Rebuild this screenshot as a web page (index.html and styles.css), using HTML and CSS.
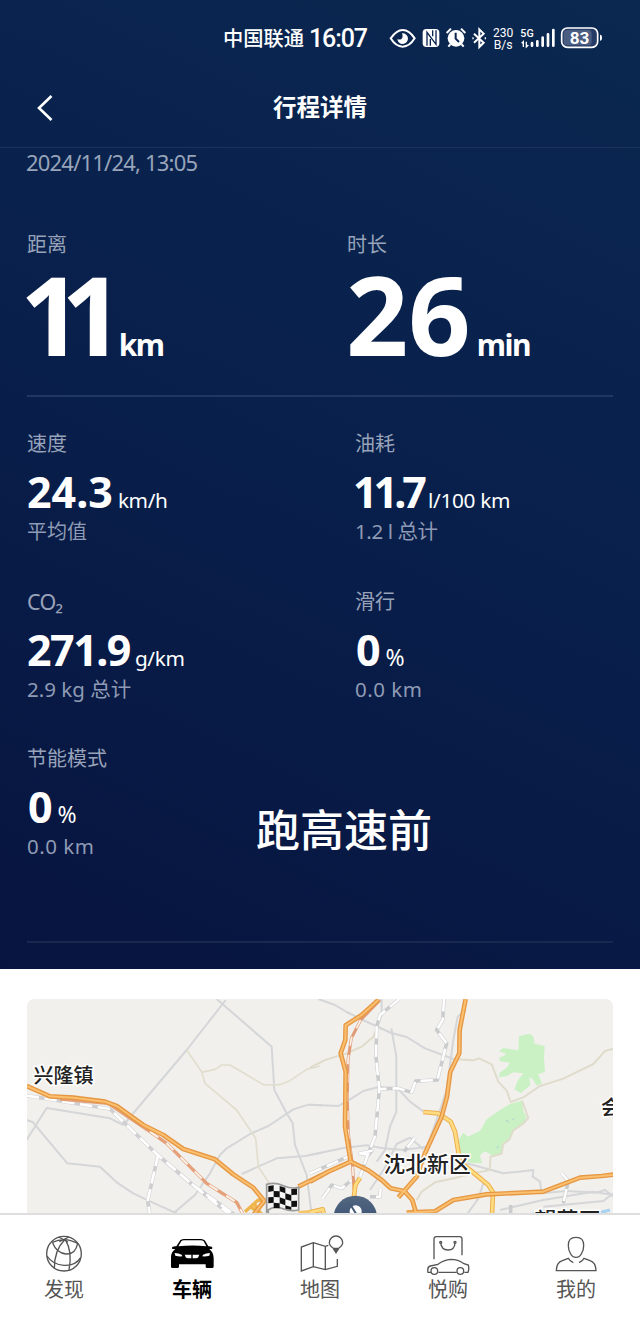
FILE: index.html
```html
<!DOCTYPE html>
<html lang="zh-CN">
<head>
<meta charset="utf-8">
<title>行程详情</title>
<link rel="stylesheet" href="styles.css">
</head>
<body>
<div class="screen">
  <main class="trip">
    <div class="status">
      <span class="carrier">中国联通</span>
      <span class="clock">16:07</span>
      <svg class="status-icons" viewBox="24 0 660 135">
        <path d="M32 70C47 49 58 45 68 45s23 5 36 25C91 91 80 95 68 95S45 91 32 70z" fill="none" stroke="#fff" stroke-width="6"/>
        <path d="M66 55a16 16 0 1 1-14 17c5 3 13 2 15-4 2-5 0-10-1-13z" fill="#fff"/>
        <rect x="128" y="42" width="50" height="54" rx="11" fill="#fff"/>
        <path d="M141 92V52l27 36V46M151 92V72M158 46v18" fill="none" stroke="#0a2550" stroke-width="4"/>
        <circle cx="228" cy="70" r="25" fill="#fff"/>
        <path d="M200 54l13-13M243 41l13 13M211 88l-6 7M245 88l6 7" stroke="#fff" stroke-width="6"/>
        <path d="M227 53v18l10 10" fill="none" stroke="#0a2550" stroke-width="6"/>
        <path d="M282 56l29 27-13 13V43l13 13-29 27M277 70h4M314 70h4" fill="none" stroke="#fff" stroke-width="6"/>
        <text x="339" y="65" class="s-small" textLength="61" lengthAdjust="spacingAndGlyphs">230</text>
        <text x="341" y="101" class="s-small" textLength="57" lengthAdjust="spacingAndGlyphs">B/s</text>
        <text x="421" y="66" class="s-net" textLength="40" lengthAdjust="spacingAndGlyphs">5G</text>
        <path d="M430 96V80l-5 5M439 80v16l6-6" fill="none" stroke="#fff" stroke-width="4"/>
        <path d="M456 92V84M472 92V79M488 92V68M504 92V58M520 92V45" stroke="#fff" stroke-width="8" stroke-linecap="round"/>
        <rect x="545" y="39" width="108" height="58" rx="17" fill="#263c66" stroke="#fff" stroke-width="5"/>
        <rect x="551" y="45" width="84" height="46" rx="11" fill="#4b5d80"/>
        <path d="M660 59q6 0 6 9t-6 9z" fill="#fff"/>
        <text x="569" y="86" class="s-batt" textLength="59" lengthAdjust="spacingAndGlyphs">83</text>
      </svg>
    </div>
    <header class="bar">
      <svg class="back" viewBox="0 0 18 30"><path d="M15.500 3L3 15L15.500 27" fill="none" stroke="#fff" stroke-width="2.600"/></svg>
      <h1 class="title">行程详情</h1>
    </header>
    <div class="date">2024/11/24, 13:05</div>
    <section class="primary">
      <div>
        <div class="label">距离</div>
        <div class="big"><span class="ones">11</span><span class="big-unit">km</span></div>
      </div>
      <div>
        <div class="label">时长</div>
        <div class="big"><span class="minutes">26</span><span class="big-unit wide">min</span></div>
      </div>
    </section>
    <section class="stats">
      <div class="stat">
        <div class="label">速度</div>
        <div class="num"><b>24.3</b><span class="unit">km/h</span></div>
        <div class="sub cjk">平均值</div>
      </div>
      <div class="stat">
        <div class="label">油耗</div>
        <div class="num"><b class="n117">11.7</b><span class="unit l100">l/100 km</span></div>
        <div class="sub total">1.2 l 总计</div>
      </div>
      <div class="stat">
        <div class="label latin">CO₂</div>
        <div class="num"><b class="n271">271.9</b><span class="unit">g/km</span></div>
        <div class="sub">2.9 kg 总计</div>
      </div>
      <div class="stat">
        <div class="label">滑行</div>
        <div class="num"><b class="zero">0</b><span class="unit pct">%</span></div>
        <div class="sub km">0.0 km</div>
      </div>
    </section>
    <section class="last">
      <div class="stat">
        <div class="label">节能模式</div>
        <div class="num"><b class="zero">0</b><span class="unit pct">%</span></div>
        <div class="sub km">0.0 km</div>
      </div>
      <div class="caption">跑高速前</div>
    </section>
  </main>
  <section class="map-wrap">
    <svg class="map" viewBox="27 999 586 214">
      <rect x="27" y="999" width="586" height="214" fill="#f1f0ed"/>
      <g transform="translate(20 990) scale(.33333)" fill="none" stroke-linejoin="round">
        <g stroke="#d5d6d8" stroke-width="6">
          <path d="M590 27L755 170L763 300L800 370L818 400L825 465L860 555L875 675"/>
          <path d="M617 30L590 65L500 180L310 405M20 450L80 354L270 385L310 405"/>
          <path d="M20 390L38 396L142 520L240 530L290 577L340 610L385 632L470 670"/>
          <path d="M460 670L525 615L570 550L600 495L620 475L690 432L745 408L820 358L865 344L905 346M665 552L770 505L855 498L905 488"/>
        </g>
        <path d="M500 180L545 245L555 280L650 360L707 445L715 530L755 590M545 247L585 238L605 225L630 225L732 285L780 284L810 272L860 238L900 228" stroke="#e1dece" stroke-width="5"/>
        <path d="M20 317L270 357L410 492L515 582L600 650L630 675M415 492L383 632L390 675M515 582L645 675" stroke="#cfcfd1" stroke-width="11"/>
        <path d="M20 317L270 357L410 492L515 582L600 650L630 675M415 492L383 632L390 675M515 582L645 675" stroke="#fff" stroke-width="8" stroke-dasharray="37 17"/>
        <path d="M120 327L265 340L390 425L440 460L560 580L650 637L670 675" stroke="#e5a079" stroke-width="10"/>
        <path d="M390 425L440 460L560 580L650 637L670 675" stroke="#faf1e8" stroke-width="6" stroke-dasharray="30 30"/>
        <path d="M675 665L715 630L730 632M690 650l40 25M705 645l20 30" stroke="#efb54c" stroke-width="10"/>
        <path d="M20 288L90 319L160 323L255 335L290 348L370 405L430 435L490 477L585 508L640 553L700 593L733 633L700 675M835 590L905 555" stroke="#e69744" stroke-width="14"/>
        <path d="M20 288L90 319L160 323L255 335L290 348L370 405L430 435L490 477L585 508L640 553L700 593L733 633L700 675M835 590L905 555" stroke="#fac06f" stroke-width="6"/>
        <path d="M835 668L905 662" stroke="#f5c567" stroke-width="10"/>
      </g>
      <g transform="translate(310 990) scale(.33333)" fill="none" stroke-linejoin="round">
        <path d="M627 139L658 131L670 139L674 161L704 168L702 205L705 245L684 253L696 280L680 287L668 268L658 260L661 286L633 309L614 299L622 274L640 250L610 247L590 258L567 262L569 248L590 233L600 218L570 214L567 205L590 192L567 184L580 174L625 181z" fill="#c9f1c4"/>
        <path d="M600 342L636 332L640 364L650 382L638 402L610 421L598 449L579 463L575 491L553 499L524 484L510 496L516 520L490 519L454 513L445 450L460 428L474 440L490 432L510 423L530 388L570 360z" fill="#c9f1c4"/>
        <path d="M588 390l8 7M560 474l6-5M612 385l-4 5" stroke="#9ec9db" stroke-width="3"/>
        <g stroke="#d5d6d8" stroke-width="6">
          <path d="M25 27L75 45L110 66L165 93L244 129L290 141L345 175L430 207"/>
          <path d="M215 27V75L200 112M244 115L259 200V365L240 410L225 480L200 515M467 60L443 80L430 150L410 300L390 360L350 475L320 560"/>
          <path d="M0 344L85 348L125 325L160 303L205 291L263 295L300 335L345 368"/>
          <path d="M0 495L100 474L170 466L220 475L280 480L350 470M470 520L580 550L625 545L670 540L668 560L690 575L695 610L770 603L860 608L885 600L910 620"/>
          <path d="M180 600L225 533L260 462L300 443L340 478M520 580L505 625L470 675M570 660L700 630L850 605L910 615M700 650L880 633L910 610"/>
        </g>
        <path d="M205 105L190 140L155 170L110 190L45 210L0 233M430 207L490 211L507 205L545 223L565 275L590 302L602 336L640 322L690 288L760 266L850 222L885 183L910 176M636 332L655 384L638 402L610 421L598 449L579 463L575 491L541 500L540 540L480 552L435 564L375 577L335 605L320 630" stroke="#e0dccb" stroke-width="6"/>
        <path d="M268 27L210 75L200 110L198 200L208 300L195 440L175 490L150 560M402 27L398 90L380 120L410 160L382 270L317 273L305 307L265 295L210 297M38 625L65 585L95 595L125 570M315 443L282 485M150 490L186 482L175 495zM0 550L115 500M212 595L210 620L180 620M755 550L775 573L760 640M602 645V675" stroke="#cacbcd" stroke-width="10.500"/>
        <path d="M268 27L210 75L200 110L198 200L208 300L195 440L175 490L150 560M402 27L398 90L380 120L410 160L382 270L317 273L305 307L265 295L210 297M38 625L65 585L95 595L125 570M315 443L282 485M150 490L186 482L175 495zM0 550L115 500M212 595L210 620L180 620M755 550L775 573L760 640" stroke="#fff" stroke-width="7.500" stroke-dasharray="37 18"/>
        <path d="M210 30L152 90L124 145L114 210L112 330L115 430L128 530L132 600" stroke="#e09a75" stroke-width="9"/>
        <path d="M152 90L124 145L114 210L112 330L115 430L128 530L132 600" stroke="#faf1e8" stroke-width="5" stroke-dasharray="28 28"/>
        <path d="M340 366L385 370L422 395L435 425L450 515L500 556L535 585L549 607L546 675M150 563L136 585L132 620M0 667L38 658L42 675" stroke="#ecae4e" stroke-width="14"/>
        <path d="M340 366L385 370L422 395L435 425L450 515L500 556L535 585L549 607L546 675M150 563L136 585L132 620M0 667L38 658L42 675" stroke="#ffdc80" stroke-width="8"/>
        <path d="M205 30L155 75L107 106L106 150L92 190L107 245L105 410L122 515L55 545L0 575M122 515L175 541L215 570L242 595L284 604L307 630L320 675M467 27L449 120L448 190L421 245L411 320L395 380L345 490L320 560L285 600L265 622M290 668L375 664L430 630L530 613L700 605L810 563L875 558L910 554" stroke="#e69744" stroke-width="14"/>
        <path d="M205 30L155 75L107 106L106 150L92 190L107 245L105 410L122 515L55 545L0 575M122 515L175 541L215 570L242 595L284 604L307 630L320 675M467 27L449 120L448 190L421 245L411 320L395 380L345 490L320 560L285 600L265 622M290 668L375 664L430 630L530 613L700 605L810 563L875 558L910 554" stroke="#fac06f" stroke-width="6"/>
        <path d="M665 675L690 663L740 670M860 670L900 660" stroke="#a8d4f2" stroke-width="10"/>
        <circle cx="136" cy="682" r="65" fill="url(#pin)"/>
        <circle cx="137" cy="664" r="18" fill="#fff"/>
        <path d="M122 645l16 26" stroke="#455a77" stroke-width="6"/>
      </g>
      <g transform="translate(20 990) scale(.33333)">
        <path d="M740 675V583q25-7 50 4t46 5v68q-24 5-47-4t-44 3v16z" fill="#f4f4f4" stroke="#999" stroke-width="5"/>
        <path d="M745 588l16-2v17l-16 3zM779 588l17 5v17l-17-6zM814 597l17-1v18l-17 1zM761 603l18 1v18l-18-1zM796 610l18 5v18l-18-5zM745 622l16-1v17l-16 2zM779 622l17 6v18l-17-6zM814 633l17-1v18l-17 1zM761 638l18 2v15l-18-1zM796 646l18 5v8l-18-3z" fill="#111"/>
      </g>
      <g class="place">
        <text x="33.500" y="1083" font-size="20">兴隆镇</text>
        <text x="383.500" y="1171.500" font-size="21.800">沈北新区</text>
        <text x="601" y="1114.500" font-size="20">会</text>
        <text x="534.500" y="1228" font-size="22">望花区</text>
      </g>
      <defs><linearGradient id="pin" x2="0" y2="1"><stop stop-color="#53677f"/><stop offset=".5" stop-color="#405778"/></linearGradient></defs>
    </svg>
  </section>
  <nav class="tabs">
    <div class="tab">
      <svg viewBox="120 81 144 126" fill="none" stroke="#555" stroke-width="4">
        <circle cx="192" cy="146" r="52"/>
        <path d="M194 104Q163 135 163 190M196 104Q218 140 207 195M157 112Q177 103 194 104T233 115M157 112Q170 145 198 147T233 115M141 153Q158 179 192 181T242 158M176 96L204 111M207 96L178 110"/>
      </svg><span>发现</span>
    </div>
    <div class="tab active">
      <svg viewBox="504 81 144 126">
        <path d="M516 129q0-6 13-5l9-14q3-8 14-8h50q11 0 15 8l8 14q12-1 12 5l-1 3h-8q13 11 13 27v26q0 4-5 4h-15q-4 0-4-4v-7h-80v7q0 4-5 4h-14q-5 0-5-4v-28q0-16 13-25h-9z"/>
        <path d="M535 124l9-15q2-3 8-3h50q6 0 9 3l8 15q-42-5-84 0z" fill="#fff"/>
        <path d="M524 144q12 1 21 5l2 5q-11 1-21-2zM554 149h20v11q-13 0-16-2zM578 149h20l-4 9q-3 2-16 2zM630 144q-12 1-21 5l-2 5q11 1 21-2z" fill="#fff"/>
      </svg><span>车辆</span>
    </div>
    <div class="tab">
      <svg viewBox="888 81 144 126" fill="none" stroke="#555" stroke-width="4">
        <path d="M985 121L976 124L940 113L904 126V198L940 185L976 194L1012 184V162M940 113V185M976 124V194"/>
        <path d="M1000 130q-12-9-12-17a20 20 0 0 1 40 0q0 8-12 17z" fill="#fff"/>
        <path d="M998 131h20l-10 16z" fill="#555" stroke="none"/>
      </svg><span>地图</span>
    </div>
    <div class="tab">
      <svg viewBox="312 84 144 126" fill="none" stroke="#555" stroke-width="4" class="low">
        <path d="M342 163V102q0-7 7-7h70q7 0 7 7v49M362 113q2 22 22 22t21-22"/>
        <circle cx="362" cy="112" r="3"/><circle cx="405" cy="112" r="3"/>
        <path d="M333 202h-9q-3-17 7-19l23-5q18-14 38-15q22 0 40 13l13 4q3 12-1 22h-11M355 202h55"/>
        <circle cx="343" cy="198" r="10"/><circle cx="421" cy="198" r="10"/>
      </svg><span>悦购</span>
    </div>
    <div class="tab">
      <svg viewBox="696 81 144 126" fill="none" stroke="#555" stroke-width="4">
        <path d="M768 97q24 0 23 25q0 14-7 25q-5 10-16 10t-16-10q-7-11-7-25q-1-25 23-25z"/>
        <path d="M760 173q-11-4-15-13l-18 7q-17 5-18 30h119q-1-25-18-30l-18-7q-4 9-15 13"/>
      </svg><span>我的</span>
    </div>
  </nav>
</div>
</body>
</html>
```
FILE: styles.css
```css
* { box-sizing: border-box; }
body {
  margin: 0;
  font-family: "Noto Sans", "Noto Sans CJK SC", sans-serif;
}
.screen {
  width: 640px;
  height: 1320px;
  overflow: hidden;
  display: flex;
  flex-direction: column;
  background: #fff;
}
.trip {
  height: 969px;
  flex: none;
  color: #fff;
  background: linear-gradient(205deg, #0a2850 0%, #09204c 45%, #07143f 100%);
}
.status {
  height: 75px;
  padding: 15px 0 0 223px;
  display: flex;
  line-height: 45px;
  white-space: nowrap;
}
.carrier { width: 86px; font-size: 20.300px; font-weight: 500; font-family: "Noto Sans CJK SC", sans-serif; }
.clock { width: 79px; padding-top: 1px; font: 500 25px/45px Roboto, sans-serif; letter-spacing: -1.100px; }
.status-icons { width: 220px; height: 45px; }
.status-icons text { fill: #fff; font-family: Roboto, sans-serif; }
.s-small { font-size: 37px; }
.s-net { font-size: 35px; font-weight: 500; }
.s-batt { font-size: 49px; font-weight: 700; }
.bar {
  height: 73px;
  display: grid;
  grid-template-columns: 60px 1fr 60px;
  border-bottom: 1px solid #1b325d;
}
.back { width: 18px; height: 30px; margin: 18px 0 0 36px; }
.title {
  margin: 0;
  text-align: center;
  font-size: 23.500px;
  font-weight: 700;
  line-height: 65px;
}
.date {
  height: 82px;
  padding-left: 26px;
  font-size: 22px;
  line-height: 28px;
  letter-spacing: -0.800px;
  color: #98a4ba;
}
.primary {
  margin: 0 27px;
  height: 167px;
  display: grid;
  grid-template-columns: 320px 1fr;
  border-bottom: 2px solid #203861;
}
.label { font-size: 20px; line-height: 30px; color: #98a3ba; }
.latin { font-size: 21.500px; letter-spacing: -0.700px; }
.big {
  height: 110px;
  font-size: 109px;
  line-height: 108px;
  white-space: nowrap;
  font-weight: 700;
}
.ones { letter-spacing: -21px; margin-left: -7px; }
.minutes { margin-left: -1px; }
.big-unit { font-size: 30px; line-height: 1; margin-left: 16px; letter-spacing: -1.500px; }
.wide { margin-left: 6px; }
.stats {
  margin: 32px 27px 0;
  display: grid;
  grid-template-columns: 328px 1fr;
  grid-auto-rows: 157.500px;
}
.num { height: 50px; margin-top: 8px; font-size: 43px; line-height: 49px; white-space: nowrap; }
.num b { font-weight: 700; }
.zero { margin-left: 1px; }
.unit { font-size: 20.800px; line-height: 1; margin-left: 5px; letter-spacing: -0.400px; }
.l100 { letter-spacing: -0.300px; }
.pct { font-size: 23px; margin-left: 5px; }
.sub { font-size: 20.500px; line-height: 29px; color: #8f9bb4; }
.cjk { font-size: 20px; }
.total { letter-spacing: -0.400px; }
.km { letter-spacing: 0.500px; }
.n117 { letter-spacing: -4px; margin-left: -2px; }
.n271 { letter-spacing: -1.500px; }
.last {
  margin: 0 27px;
  height: 199px;
  display: flex;
  border-bottom: 2px solid #18284f;
}
.last .stat { width: 229px; }
.caption { padding-top: 56px; font-size: 44px; font-weight: 500; line-height: 60px; }
.map-wrap { height: 244px; padding: 30px 27px 0; flex: none; }
.map { display: block; width: 586px; height: 214px; border-radius: 7px 7px 0 0; }
.place { fill: #222; font-weight: 500; font-family: "Noto Sans CJK SC", sans-serif; stroke: #fff; stroke-width: 3px; paint-order: stroke; }
.tabs {
  height: 107px;
  display: grid;
  grid-template-columns: repeat(5, 1fr);
  border-top: 2px solid #dedede;
}
.tab {
  display: flex;
  flex-direction: column;
  align-items: center;
  padding-top: 17px;
  font-size: 20px;
  line-height: 32px;
  color: #555;
}
.tab svg { width: 48px; height: 42px; }
.tab .low { margin: 1px 0 -1px; }
.active { color: #000; font-weight: 700; }
```
